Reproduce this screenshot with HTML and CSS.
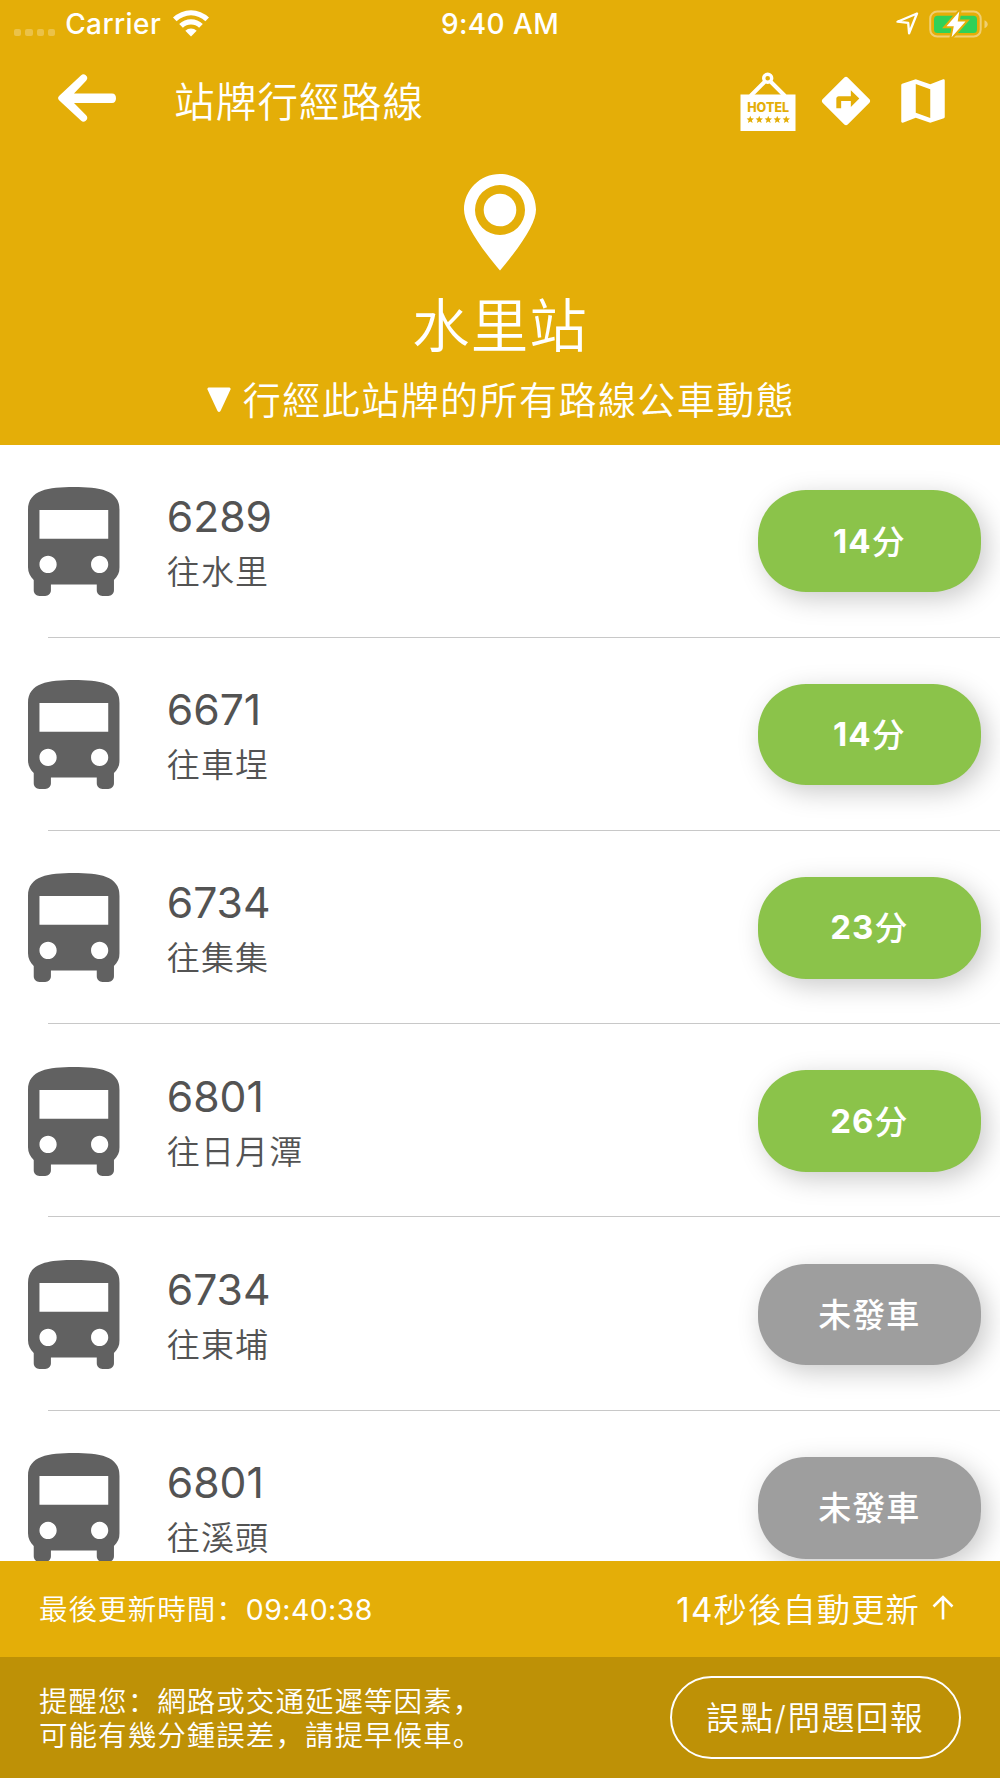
FILE: index.html
```
<!DOCTYPE html>
<html lang="zh-Hans">
<head>
<meta charset="utf-8">
<title>站牌行經路線</title>
<link rel="stylesheet" href="styles.css">
</head>
<body>
<svg class="defs" width="0" height="0">
  <symbol id="bus" viewBox="4 2 16 19"><path d="M4 16c0 .88.39 1.67 1 2.22V20c0 .55.45 1 1 1h1c.55 0 1-.45 1-1v-1h8v1c0 .55.45 1 1 1h1c.55 0 1-.45 1-1v-1.780c.61-.55 1-1.340 1-2.220V6c0-3.500-3.580-4-8-4s-8 .5-8 4v10zm3.500 1c-.83 0-1.500-.67-1.500-1.500S6.670 14 7.500 14s1.500.67 1.500 1.500S8.330 17 7.500 17zm9 0c-.83 0-1.500-.67-1.500-1.500s.67-1.500 1.500-1.500 1.500.67 1.500 1.500-.67 1.500-1.500 1.500zm1.500-6H6V6h12v5z"/></symbol>
  <symbol id="star" viewBox="0 0 10 10"><path d="M5 0l1.350 3.300 3.650.3-2.800 2.400.9 3.600L5 7.700 1.900 9.600l.9-3.600L0 3.600l3.650-.3z"/></symbol>
</svg>
<div class="screen">
  <header class="header">
    <div class="status">
      <div class="status-left">
        <div class="signal"><i></i><i></i><i></i><i></i></div>
        <span class="carrier">Carrier</span>
        <svg class="wifi" width="38" height="28" viewBox="0 0 38 28"><g fill="#fff"><path d="M1 8.500a26 26 0 0 1 36 0l-3.600 3.700a20.700 20.700 0 0 0-28.800 0z"/><path d="M7.200 15a17 17 0 0 1 23.600 0l-3.700 3.700a11.800 11.800 0 0 0-16.200 0z"/><path d="M13.300 21.700a8.300 8.300 0 0 1 11.400 0L19 27.400z"/></g></svg>
      </div>
      <span class="clock">9:40 AM</span>
      <div class="status-right">
        <svg width="23" height="23" viewBox="0 0 23 23"><path d="M21 1.500L1.500 9.700l10.700 1.100.9 10.500z" fill="none" stroke="#fff" stroke-width="2.300" stroke-linejoin="round"/></svg>
        <svg width="60" height="28" viewBox="0 0 60 28"><rect x="1.200" y="1.600" width="50.500" height="25" rx="7" fill="none" stroke="#f0cf72" stroke-width="2"/><rect x="5" y="5.700" width="43" height="17.300" rx="3.500" fill="#30d158"/><path d="M55.500 10.200q3.200 1.400 3.200 4t-3.200 4z" fill="#f0cf72"/><path d="M30.300 1.600L17.500 16.200h7.300l-2.200 11L36.500 11.500h-7.800z" fill="#fff" stroke="#e4ae08" stroke-width="4" paint-order="stroke"/></svg>
      </div>
    </div>
    <div class="nav">
      <svg class="back" width="58" height="48" viewBox="0 0 58 48"><path d="M27.500 1q-2.200-1.800-4.600.5L1.300 21.700q-2.500 2.300 0 4.800L22.900 46.600q2.400 2.200 4.600.4 3.300-2.700.6-5.700L16 29h38q4 0 4-4.700t-4-4.700H16L28.100 6.800q2.700-3.100-.6-5.800z" fill="#fff"/></svg>
      <h1 class="nav-title">站牌行經路線</h1>
      <div class="actions">
        <svg class="hotel" width="56" height="60" viewBox="0 0 56 60"><g fill="none" stroke="#fff"><circle cx="27.700" cy="6.200" r="4" stroke-width="3.400"/><path d="M24.500 10L10.500 24M31 10l14 14" stroke-width="4"/></g><rect x=".5" y="22.500" width="55" height="36.500" fill="#fff"/><text x="7.200" y="40" textLength="42" lengthAdjust="spacingAndGlyphs" class="hotel-text">HOTEL</text><g fill="#e4ae08"><use href="#star" x="6.500" y="43.800" width="7.500" height="7.500"/><use href="#star" x="15.500" y="43.800" width="7.500" height="7.500"/><use href="#star" x="24.500" y="43.800" width="7.500" height="7.500"/><use href="#star" x="33.500" y="43.800" width="7.500" height="7.500"/><use href="#star" x="42.500" y="43.800" width="7.500" height="7.500"/></g></svg>
        <svg class="material" viewBox="0 0 24 24"><path d="M21.710 11.290l-9-9c-.39-.39-1.020-.39-1.410 0l-9 9c-.39.39-.39 1.020 0 1.410l9 9c.39.39 1.020.39 1.410 0l9-9c.39-.38.39-1.010 0-1.410zM14 14.500V12h-4v3H8v-4c0-.55.45-1 1-1h5V7.500l3.500 3.500-3.500 3.500z"/></svg>
        <svg class="material" viewBox="0 0 24 24"><path d="M20.500 3l-.16.03L15 5.100 9 3 3.360 4.900c-.21.07-.36.25-.36.48V20.500c0 .28.22.5.5.5l.16-.03L9 18.900l6 2.100 5.640-1.900c.21-.07.36-.25.36-.48V3.500c0-.28-.22-.5-.5-.5zM15 19l-6-2.110V5l6 2.110V19z"/></svg>
      </div>
    </div>
    <div class="stop">
      <svg class="pin" width="72" height="97" viewBox="0 0 72 97"><path fill="#fff" fill-rule="evenodd" d="M36 0C16 0 0 16 0 35.500 0 48 12 68 36 96.500 60 68 72 48 72 35.500 72 16 56 0 36 0zM36 11a25 25 0 1 1 0 50 25 25 0 0 1 0-50z"/><circle cx="36" cy="36" r="16.300" fill="#fff"/></svg>
      <h2 class="stop-name">水里站</h2>
      <p class="stop-note"><svg width="24" height="26" viewBox="0 0 24 26"><path d="M1.500.5h21q1.500.5 1 2L13.500 24q-1.500 2-3 0L.5 2.500q-.5-1.500 1-2z" fill="#fff"/></svg><span>行經此站牌的所有路線公車動態</span></p>
    </div>
  </header>
  <main class="routes">
    <section class="route"><svg class="bus"><use href="#bus"/></svg><div class="info"><b class="no">6289</b><span class="to">往水里</span></div><div class="eta"><b>14</b>分</div></section>
    <section class="route"><svg class="bus"><use href="#bus"/></svg><div class="info"><b class="no">6671</b><span class="to">往車埕</span></div><div class="eta"><b>14</b>分</div></section>
    <section class="route"><svg class="bus"><use href="#bus"/></svg><div class="info"><b class="no">6734</b><span class="to">往集集</span></div><div class="eta"><b>23</b>分</div></section>
    <section class="route"><svg class="bus"><use href="#bus"/></svg><div class="info"><b class="no">6801</b><span class="to">往日月潭</span></div><div class="eta"><b>26</b>分</div></section>
    <section class="route"><svg class="bus"><use href="#bus"/></svg><div class="info"><b class="no">6734</b><span class="to">往東埔</span></div><div class="eta idle">未發車</div></section>
    <section class="route"><svg class="bus"><use href="#bus"/></svg><div class="info"><b class="no">6801</b><span class="to">往溪頭</span></div><div class="eta idle">未發車</div></section>
  </main>
  <footer>
    <div class="update">
      <span class="last">最後更新時間：<span class="time">09:40:38</span></span>
      <span class="next"><span><span class="secs">14</span>秒後自動更新</span><svg width="22" height="25" viewBox="0 0 22 25"><path d="M11 24.500V2M1.500 11.500L11 2l9.500 9.500" fill="none" stroke="#fff" stroke-width="2.600"/></svg></span>
    </div>
    <div class="remind">
      <p class="tip">提醒您：網路或交通延遲等因素，<br>可能有幾分鍾誤差，請提早候車。</p>
      <button class="report">誤點/問題回報</button>
    </div>
  </footer>
</div>
</body>
</html>
```
FILE: styles.css
```
* { box-sizing: border-box; margin: 0; padding: 0; }
body { background: #fff; color: #fff; font-family: Inter, "Noto Sans CJK SC", sans-serif; font-weight: 350; }
svg { display: block; flex: none; }
.defs { display: none; }
.screen { width: 1000px; height: 1778px; display: flex; flex-direction: column; overflow: hidden; }
.header { height: 444.600px; flex: none; background: #e4ae08; }

.status { height: 48px; display: grid; grid-template-columns: 1fr auto 1fr; align-items: center; padding: 0 12px 0 14px; font-size: 28px; font-weight: 450; }
.status-left, .status-right { display: flex; align-items: center; }
.status-right { justify-content: flex-end; gap: 10px; margin-right: -1px; margin-top: -1px; }
.signal { display: flex; gap: 4px; margin-top: 17px; }
.signal i { width: 7.300px; height: 7.300px; border-radius: 2px; background: #ebc248; }
.carrier { margin-left: 10px; width: 97px; letter-spacing: .4px; }
.wifi { margin-left: 10px; margin-top: -2px; }
.clock { letter-spacing: .4px; margin-left: -2px; }

.nav { height: 104px; display: flex; align-items: center; padding: 0 48px 0 58px; }
.back { margin-top: -4px; }
.nav-title { margin-left: 58px; padding-top: 5px; font-size: 40.500px; font-weight: 350; letter-spacing: 1.200px; line-height: 60px; }
.actions { margin-left: auto; padding-top: 3px; display: flex; align-items: center; }
.hotel { margin-right: 21px; }
.material { width: 58px; height: 58px; margin-top: -1px; fill: #fff; }
.material + .material { margin-left: 19.400px; }
.hotel-text { font: 800 12.500px Inter, sans-serif; fill: #e4ae08; }

.stop { display: flex; flex-direction: column; align-items: center; padding-top: 22px; }
.stop-name { margin-top: 13px; font-size: 57.500px; font-weight: 350; letter-spacing: 1.100px; line-height: 84px; }
.stop-note { display: flex; align-items: center; gap: 12px; margin-top: 4px; padding-left: 2px; font-size: 38px; letter-spacing: 1.450px; line-height: 56px; }

.routes { flex: 1; min-height: 0; overflow: hidden; color: #535353; background: #fff; }
.route { height: 193.300px; display: flex; align-items: center; padding: 0 19.300px 0 28px; background: linear-gradient(#c8c8c8, #c8c8c8) 48px 100% / 100% 1.300px no-repeat; }
.bus { width: 91.700px; height: 109px; fill: #616161; }
.info { margin-left: 47px; padding-top: 7px; display: flex; flex-direction: column; }
.no { font-size: 42.700px; font-weight: 400; line-height: 54px; }
.to { font-size: 33px; letter-spacing: 1.200px; line-height: 56px; }
.eta { margin-left: auto; width: 222.700px; height: 101.700px; border-radius: 48px; background: #8bc34a; color: #fff; display: flex; align-items: center; justify-content: center; font-size: 33px; font-weight: 500; letter-spacing: 1px; padding-bottom: 3px; box-shadow: 6px 7px 27px rgba(0, 0, 0, .21); }
.eta b { font-size: 33px; font-weight: 700; padding-top: 2px; }
.idle { background: #9e9e9e; }

footer { flex: none; }
.update { height: 96.500px; background: #e4ae08; display: flex; align-items: center; justify-content: space-between; padding: 0 46px 2px 39px; }
.last { font-size: 28.500px; letter-spacing: 1.050px; }
.time { font-weight: 400; letter-spacing: .4px; }
.next { display: flex; align-items: center; font-size: 33.300px; letter-spacing: 1.100px; padding-bottom: 1px; }
.secs { font-weight: 400; }
.next svg { margin-left: 12px; }
.remind { height: 121px; background: #be9106; display: flex; align-items: center; justify-content: space-between; padding: 0 39px; }
.tip { font-size: 28.500px; line-height: 34px; letter-spacing: 1.050px; padding-top: 2px; }
.report { width: 291.500px; height: 83px; border: 2.700px solid #fff; border-radius: 41.500px; background: none; color: #fff; font: inherit; font-size: 32.700px; letter-spacing: 1.500px; padding-bottom: 4px; }
```
